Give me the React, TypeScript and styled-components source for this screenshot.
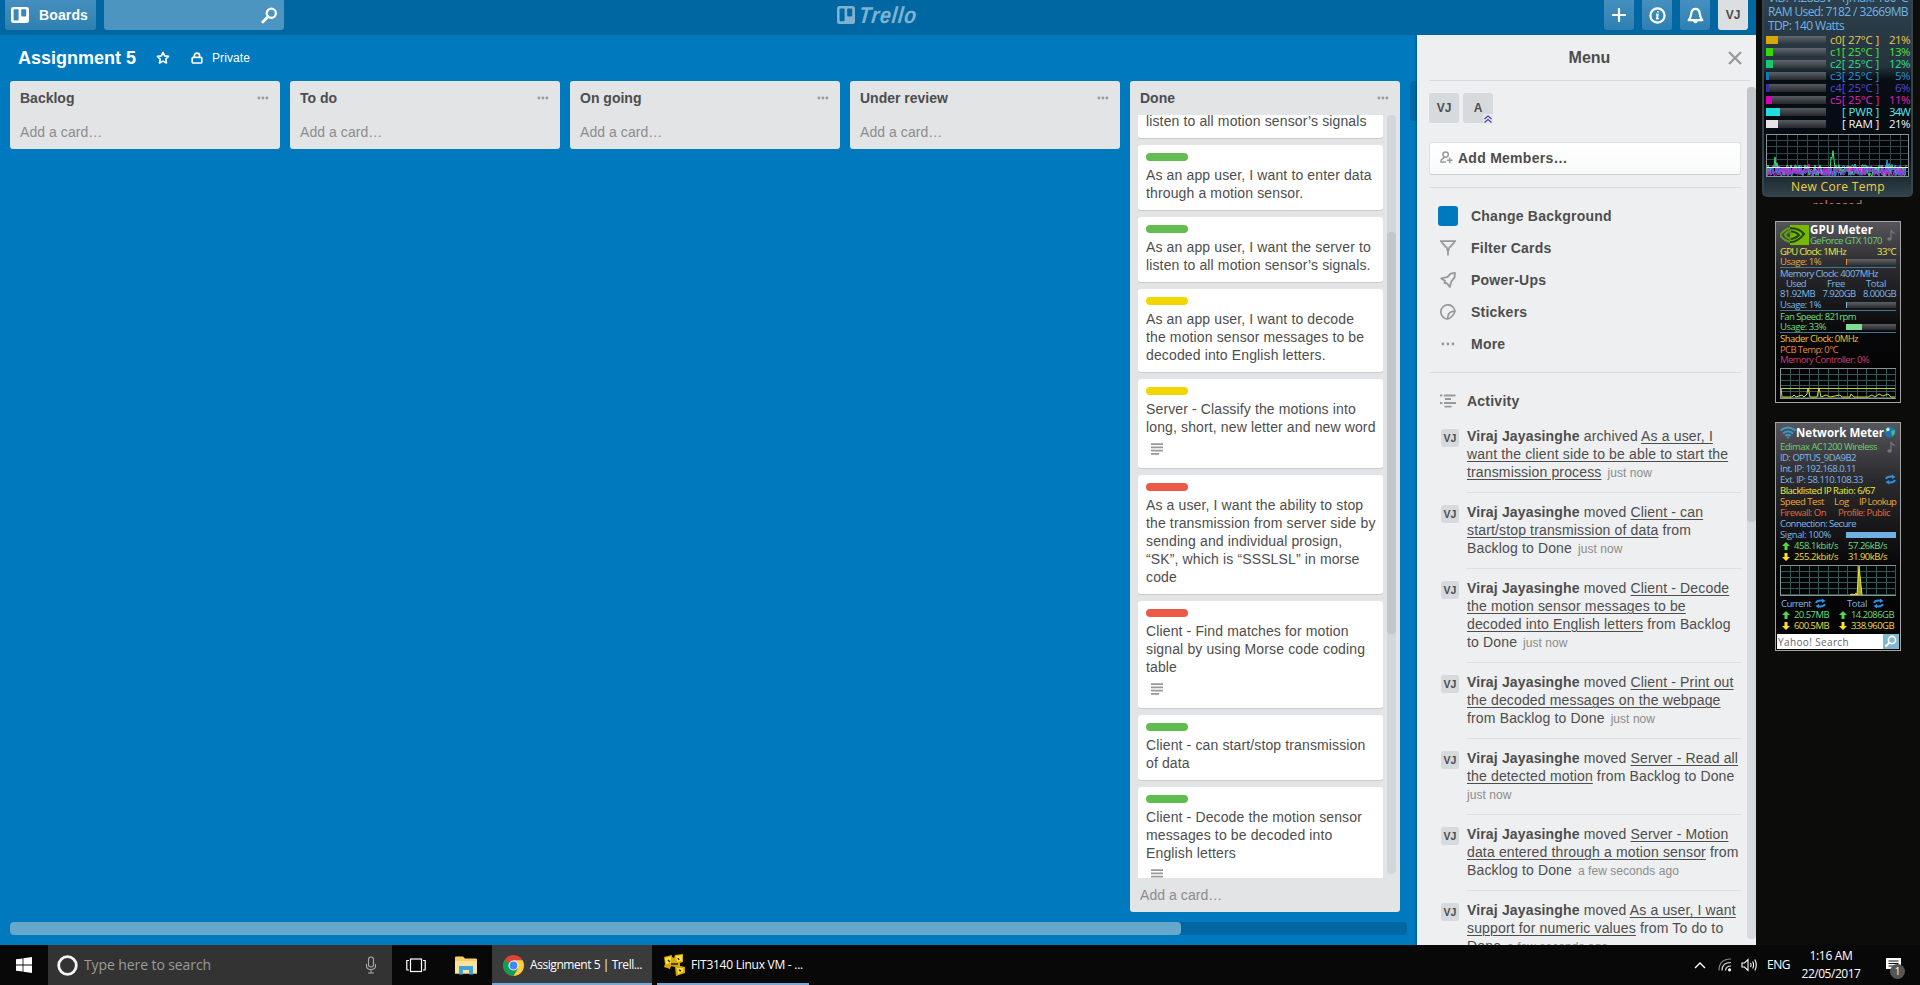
import React, { useLayoutEffect, useRef } from "react";
import styled, { createGlobalStyle, css } from "styled-components";

const Global = createGlobalStyle`
  * { box-sizing: border-box; }
  body { margin: 0; background: #0c0c0b; overflow: hidden; }
`;

const ui = `"Liberation Sans", Arial, sans-serif`;
const segoe = `"Open Sans", "Noto Sans", sans-serif`;

/* ---------- text squeezed into a fixed label width ---------- */
const Label = styled.span`
  display: inline-block;
  white-space: pre;
  flex: none;
`;
function Fit({ w, children, className }: { w: number; children: string; className?: string }) {
  const ref = useRef<HTMLSpanElement>(null);
  useLayoutEffect(() => {
    const el = ref.current;
    if (!el) return;
    el.style.letterSpacing = "0px";
    const natural = el.getBoundingClientRect().width;
    el.style.letterSpacing = `${(w - natural) / children.length}px`;
  }, [w, children]);
  return (
    <Label ref={ref} className={className}>
      {children}
    </Label>
  );
}

/* ---------- page frame ---------- */
const Screen = styled.div`
  width: 1920px;
  height: 985px;
  display: flex;
  flex-direction: column;
  overflow: hidden;
  background: #0c0c0b;
  font-family: ${ui};
`;
const Desktop = styled.div`
  display: flex;
  height: 945px;
`;
const Browser = styled.div`
  width: 1756px;
  height: 945px;
  display: flex;
  flex-direction: column;
  background: #0079bf;
`;

/* ---------- top bar ---------- */
const TopBar = styled.header`
  height: 35px;
  flex: none;
  display: flex;
  justify-content: space-between;
  align-items: flex-start;
  padding: 0 8px 0 5px;
  background: #0067a3;
`;
const BarGroup = styled.div<{ $gap: number; $w?: number }>`
  display: flex;
  gap: ${(p) => p.$gap}px;
  ${(p) => p.$w && `width: ${p.$w}px;`}
  justify-content: ${(p) => (p.$w ? "flex-end" : "flex-start")};
`;
const BarButton = styled.div<{ $w?: number }>`
  width: ${(p) => p.$w ?? 30}px;
  height: 30px;
  display: flex;
  align-items: center;
  justify-content: center;
  gap: 10px;
  border-radius: 0 0 3px 3px;
  background: linear-gradient(#4590bf, #2e80b2);
  color: #fff;
  font-weight: 700;
  font-size: 14px;
`;
const HomeButton = styled(BarButton)`
  justify-content: flex-start;
  padding-left: 6px;
`;
const SearchBox = styled(BarButton)`
  justify-content: flex-end;
  padding-right: 6px;
  background: #4d95c1;
`;
const UserButton = styled(BarButton)`
  background: #dcdfe1;
  color: #4d4d4d;
  font-size: 12px;
`;
const Logo = styled.div`
  display: flex;
  align-items: center;
  gap: 4px;
  height: 30px;
  color: #7fb2d1;
  font: italic 700 23px/29px ${ui};
`;
const LogoText = styled.span`
  display: block;
  width: 55px;
  height: 29px;
  transform: skewX(-6deg) scaleX(0.86);
  transform-origin: left center;
`;

/* ---------- board ---------- */
const Main = styled.div`
  display: flex;
  height: 910px;
`;
const Board = styled.div`
  width: 1417px;
  display: flex;
  flex-direction: column;
  overflow: hidden;
`;
const BoardHeader = styled.div`
  height: 46px;
  flex: none;
  display: flex;
  align-items: center;
  padding: 0 0 0 18px;
  color: #fff;
`;
const BoardName = styled.h1`
  margin: 0;
  width: 138px;
  font: 700 18px/24px ${ui};
`;
const Privacy = styled.div`
  display: flex;
  align-items: center;
  gap: 9px;
  margin-left: 21px;
  font-size: 12px;
`;
const Lists = styled.div`
  display: flex;
  flex: none;
  align-items: flex-start;
  gap: 10px;
  height: 831px;
  padding-left: 10px;
  overflow: hidden;
`;
const ListBox = styled.section`
  width: 270px;
  flex: none;
  display: flex;
  flex-direction: column;
  border-radius: 3px;
  background: #e2e4e6;
`;
const NextList = styled.div`
  width: 270px;
  height: 40px;
  flex: none;
  border-radius: 3px;
  background: #006aa8;
`;
const ListHead = styled.div`
  height: 34px;
  display: flex;
  align-items: center;
  justify-content: space-between;
  padding: 0 11px 0 10px;
  color: #4d4d4d;
  font: 700 14px/18px ${ui};
`;
const AddCard = styled.div`
  height: 34px;
  padding-left: 10px;
  color: #8c8c8c;
  font: 14px/34px ${ui};
  letter-spacing: 0.06px;
`;
const ScrollArea = styled.div`
  height: 763px;
  display: flex;
  gap: 4px;
  padding-left: 8px;
`;
const Cards = styled.div`
  width: 245px;
  height: 763px;
  overflow: hidden;
`;
const CardBox = styled.article<{ $cut?: boolean }>`
  margin: ${(p) => (p.$cut ? "-3px" : 0)} 0 7px;
  padding: ${(p) => (p.$cut ? 0 : 8)}px 8px 8px;
  border-radius: 3px;
  background: #fff;
  box-shadow: 0 1px 0 #ccc;
  color: #4d4d4d;
  font: 14px/18px ${ui};
  letter-spacing: 0.13px;
`;
const Line = styled.div`
  white-space: nowrap;
`;
const colours = { green: "#61bd4f", yellow: "#f2d600", red: "#eb5a46" };
const Tag = styled.div<{ $c: keyof typeof colours }>`
  width: 42px;
  height: 8px;
  margin-bottom: 5px;
  border-radius: 4px;
  background: ${(p) => colours[p.$c]};
`;
const Badge = styled.div`
  height: 24px;
  padding: 7px 0 0 5px;
`;
const Track = styled.div<{ $w: number; $h: number; $bg: string }>`
  width: ${(p) => p.$w}px;
  height: ${(p) => p.$h}px;
  flex: none;
  border-radius: 4px;
  background: ${(p) => p.$bg};
`;
const Thumb = styled.div<{ $top?: number; $w?: number; $h: number; $bg: string }>`
  margin-top: ${(p) => p.$top ?? 0}px;
  width: ${(p) => (p.$w ? `${p.$w}px` : "100%")};
  height: ${(p) => p.$h}px;
  border-radius: 4px;
  background: ${(p) => p.$bg};
`;
const TrackFlow = styled(Track)`
  display: flow-root;
`;
const BottomScroll = styled.div`
  padding: 10px 0 10px 10px;
`;

const Dots = ({ r = 1.4, gap = 4, c = "#999" }) => (
  <svg width={gap * 2 + r * 2 + 1} height="6" viewBox={`0 0 ${gap * 2 + r * 2 + 1} 6`}>
    {[0, 1, 2].map((i) => (
      <circle key={i} cx={r + 0.5 + i * gap} cy="3" r={r} fill={c} />
    ))}
  </svg>
);

type Card = { tag?: keyof typeof colours; lines: string[]; desc?: boolean };
const doneCards: Card[] = [
  { lines: ["listen to all motion sensor’s signals"] },
  { tag: "green", lines: ["As an app user, I want to enter data", "through a motion sensor."] },
  { tag: "green", lines: ["As an app user, I want the server to", "listen to all motion sensor’s signals."] },
  { tag: "yellow", lines: ["As an app user, I want to decode", "the motion sensor messages to be", "decoded into English letters."] },
  { tag: "yellow", lines: ["Server - Classify the motions into", "long, short, new letter and new word"], desc: true },
  { tag: "red", lines: ["As a user, I want the ability to stop", "the transmission from server side by", "sending and individual prosign,", "“SK”, which is “SSSLSL” in morse", "code"] },
  { tag: "red", lines: ["Client - Find matches for motion", "signal by using Morse code coding", "table"], desc: true },
  { tag: "green", lines: ["Client - can start/stop transmission", "of data"] },
  { tag: "green", lines: ["Client - Decode the motion sensor", "messages to be decoded into", "English letters"], desc: true },
];

/* ---------- menu ---------- */
const Menu = styled.aside`
  width: 339px;
  height: 910px;
  display: flex;
  flex-direction: column;
  background: #edeff0;
  color: #4d4d4d;
  box-shadow: 0 0 3px rgba(0, 0, 0, 0.5);
  clip-path: inset(0 0 0 -4px);
`;
const MenuHead = styled.div`
  height: 46px;
  flex: none;
  display: grid;
  grid-template-columns: 1fr auto 1fr;
  align-items: center;
  margin: 0 6px 0 12px;
  border-bottom: 1px solid #d6dadc;
  font: 700 16px/20px ${ui};
`;
const MenuTitle = styled.span`
  grid-column: 2;
`;
const CloseSlot = styled.span`
  justify-self: end;
  display: flex;
  padding-right: 8px;
  margin-top: 1px;
`;
const MenuScroll = styled.div`
  display: flex;
  height: 864px;
`;
const MenuBody = styled.div`
  width: 330px;
  height: 864px;
  padding: 12px 6px 0 12px;
  overflow: hidden;
`;
const MenuTrack = styled(TrackFlow)`
  margin-top: 6px;
`;
const Members = styled.div`
  display: flex;
  gap: 4px;
`;
const Avatar = styled.div<{ $small?: boolean }>`
  position: relative;
  width: ${(p) => (p.$small ? 18 : 30)}px;
  height: ${(p) => (p.$small ? 18 : 30)}px;
  flex: none;
  border-radius: 3px;
  background: #d6dadc;
  color: #4d4d4d;
  text-align: center;
  font: 700 ${(p) => (p.$small ? "10.5px/19px" : "12px/30px")} ${ui};
`;
const Admin = styled.svg`
  position: absolute;
  right: 0;
  bottom: -1px;
`;
const AddMembers = styled.div`
  height: 33px;
  margin-top: 19px;
  display: flex;
  align-items: center;
  gap: 5px;
  padding: 0 0 2px 10px;
  border: 1px solid #dfe1e2;
  border-bottom-color: #cdd0d1;
  border-radius: 3px;
  background: linear-gradient(#fff, #f8f9f9);
  font: 700 14px/18px ${ui};
  letter-spacing: 0.26px;
`;
const Rule = styled.div<{ $top: number; $bottom: number }>`
  height: 1px;
  margin: ${(p) => p.$top}px 0 ${(p) => p.$bottom}px;
  background: #d6dadc;
`;
const MenuItem = styled.div`
  height: 32px;
  display: grid;
  grid-template-columns: 33px 1fr;
  align-items: center;
  padding-left: 9px;
  font: 700 14px/18px ${ui};
  letter-spacing: 0.23px;
`;
const IconSlot = styled.span`
  width: 20px;
  display: flex;
  justify-content: center;
`;
const Swatch = styled.span`
  width: 20px;
  height: 20px;
  border-radius: 3px;
  background: #0079bf;
`;
const ActivityHead = styled(MenuItem)`
  height: 36px;
  grid-template-columns: 29px 1fr;
`;
const Entry = styled.div`
  display: flex;
  gap: 8px;
  padding-left: 12px;
`;
const EntryText = styled.div`
  flex: 1;
  margin-bottom: 10px;
  padding-bottom: 11px;
  border-bottom: 1px solid #dcdfe1;
  font: 14px/18px ${ui};
  letter-spacing: 0.15px;
  & > div { white-space: nowrap; height: 18px; }
  u { text-decoration-thickness: 1px; text-underline-offset: 2px; }
`;
const AvatarSlot = styled.div`
  padding-top: 2px;
`;
const When = styled.span<{ $alone?: boolean }>`
  color: #8c8c8c;
  font-size: 12px;
  line-height: 12px;
  letter-spacing: 0.05px;
  margin-left: ${(p) => (p.$alone ? 0 : 6)}px;
`;

const name = <b>Viraj Jayasinghe</b>;
const activity: React.ReactNode[][] = [
  [<>{name} archived <u>As a user, I</u></>, <u>want the client side to be able to start the</u>, <><u>transmission process</u><When>just now</When></>],
  [<>{name} moved <u>Client - can</u></>, <><u>start/stop transmission of data</u> from</>, <>Backlog to Done<When>just now</When></>],
  [<>{name} moved <u>Client - Decode</u></>, <u>the motion sensor messages to be</u>, <><u>decoded into English letters</u> from Backlog</>, <>to Done<When>just now</When></>],
  [<>{name} moved <u>Client - Print out</u></>, <u>the decoded messages on the webpage</u>, <>from Backlog to Done<When>just now</When></>],
  [<>{name} moved <u>Server - Read all</u></>, <><u>the detected motion</u> from Backlog to Done</>, <When $alone>just now</When>],
  [<>{name} moved <u>Server - Motion</u></>, <><u>data entered through a motion sensor</u> from</>, <>Backlog to Done<When>a few seconds ago</When></>],
  [<>{name} moved <u>As a user, I want</u></>, <><u>support for numeric values</u> from To do to</>, <>Done<When>a few seconds ago</When></>],
];

/* ---------- desktop gadgets ---------- */
const Gadgets = styled.div`
  width: 164px;
  height: 945px;
  display: flex;
  flex-direction: column;
  align-items: flex-start;
  padding-left: 6px;
  font-family: ${segoe};
  overflow: hidden;
`;
const CoreTemp = styled.div`
  width: 151px;
  height: 197px;
  flex: none;
  display: flex;
  flex-direction: column;
  padding: 0 1px 0 2px;
  overflow: hidden;
  border: 2px solid #35434b;
  border-top: 0;
  border-radius: 0 0 5px 5px;
  background: linear-gradient(#2c3f4c 0, #25343e 66px, #060d13 80px, #050b12 150px, #33434c 197px);
  color: #6fb4e6;
  font-size: 12px;
`;
const CoreLine = styled.div<{ $h: number }>`
  height: ${(p) => p.$h}px;
  display: flex;
  align-items: flex-end;
  line-height: 14px;
  padding-left: 2px;
`;
const CoreRows = styled.div`
  padding-top: 1px;
`;
const CoreRow = styled.div<{ $c: string }>`
  height: 12px;
  display: flex;
  align-items: center;
  color: ${(p) => p.$c};
  font-size: 11.5px;
  line-height: 12px;
`;
const PctSlot = styled.div`
  width: 31px;
  display: flex;
  justify-content: flex-end;
`;
const Grow = styled.span`
  flex: 1;
`;
const Meter = styled.div<{ $w: number; $h: number; $fill: number; $c: string }>`
  width: ${(p) => p.$w}px;
  height: ${(p) => p.$h}px;
  flex: none;
  background: linear-gradient(${(p) => p.$c}, ${(p) => p.$c}) 0 0 / ${(p) => p.$fill}px 100% no-repeat,
    linear-gradient(rgba(120, 125, 130, 0.7), rgba(50, 52, 56, 0.7));
`;
const CoreFoot = styled.div`
  height: 21px;
  display: flex;
  justify-content: center;
  align-items: flex-end;
  line-height: 17px;
  color: #f0d040;
  font-size: 12px;
`;
const Cropped = styled.div`
  width: 151px;
  height: 4px;
  margin-top: 3px;
  flex: none;
  overflow: hidden;
  text-align: center;
  color: #e87a86;
  font: 12px/12px ${segoe};
`;
const Panel = styled.div<{ $top: number; $h: number }>`
  width: 126px;
  height: ${(p) => p.$h}px;
  margin: ${(p) => p.$top}px 0 0 13px;
  flex: none;
  display: flex;
  flex-direction: column;
  padding: 0 4px;
  border: 1px solid #a3a3a3;
  background: linear-gradient(#55555a, #2b2b2e 25%, #08080a 62%, #000);
  color: #7fb8e8;
  font-size: 9.5px;
`;
const Row = styled.div<{ $h?: number; $c?: string; $line?: boolean; $pad?: number }>`
  height: ${(p) => p.$h ?? 10}px;
  flex: none;
  display: flex;
  align-items: center;
  justify-content: space-between;
  line-height: 10px;
  padding-left: ${(p) => p.$pad ?? 0}px;
  ${(p) => p.$c && `color: ${p.$c};`}
  ${(p) => p.$line && css`border-bottom: 1px solid #3f7796;`}
`;
const Inset = styled.div<{ $r: number }>`
  padding-right: ${(p) => p.$r}px;
`;
const TitleRow = styled.div<{ $h: number }>`
  height: ${(p) => p.$h}px;
  display: flex;
  flex: none;
  align-items: center;
  justify-content: space-between;
`;
const TitleStack = styled.div`
  display: flex;
  flex-direction: column;
  width: 76px;
`;
const Title = styled.div`
  height: 11px;
  color: #fff;
  font-weight: 700;
  font-size: 11.5px;
  line-height: 11px;
`;
const Sub = styled.div`
  height: 10px;
  color: #6fd06f;
  line-height: 11px;
`;
const YahooBox = styled.div`
  height: 15px;
  margin: 3px -3px 0;
  display: flex;
  align-items: center;
  justify-content: space-between;
  background: #fff;
  color: #666;
  font-size: 10px;
  line-height: 12px;
  padding-left: 1px;
`;
const Gap = styled.div<{ $h: number }>`
  height: ${(p) => p.$h}px;
  flex: none;
`;
const Plot = styled.svg`
  flex: none;
`;

function noise(n: number, seed: number) {
  let s = seed;
  return Array.from({ length: n }, () => ((s = (s * 16807) % 2147483647) / 2147483647));
}
function Graph({ w, h, step, children, c = "#2f4c4c" }: { w: number; h: number; step: number; children?: React.ReactNode; c?: string }) {
  return (
    <Plot width={w} height={h} viewBox={`0 0 ${w} ${h}`}>
      <rect x="0.5" y="0.5" width={w - 1} height={h - 1} fill="#020507" stroke="#8a9494" />
      {Array.from({ length: Math.floor(w / step) }, (_, i) => (
        <path key={i} d={`M${Math.round((i + 1) * step) + 0.5} 1V${h - 1}`} stroke={c} />
      ))}
      {Array.from({ length: Math.floor(h / (step * 0.6)) }, (_, i) => (
        <path key={i} d={`M1 ${Math.round((i + 1) * step * 0.6) + 0.5}H${w - 1}`} stroke={c} />
      ))}
      {children}
    </Plot>
  );
}
const series = (seed: number, amp: number, peaks: Record<number, number>) =>
  "M1 42 " + noise(140, seed).map((v, i) => `L${1 + i} ${(42 - v * amp - (peaks[i] ?? 0)).toFixed(1)}`).join(" ");

const cores: [string, string, string, string, number][] = [
  ["#e8c84a", "c0[ 27°C ]", "21%", "#d8a80c", 12],
  ["#4fe03a", "c1[ 25°C ]", "13%", "#35d80a", 7],
  ["#35dc8a", "c2[ 25°C ]", "12%", "#18c870", 7],
  ["#2c92d8", "c3[ 25°C ]", "5%", "#1677b0", 3],
  ["#5548d8", "c4[ 25°C ]", "6%", "#3c2f9c", 3],
  ["#e020b8", "c5[ 25°C ]", "11%", "#d800b0", 6],
  ["#50e8e8", "[ PWR ]", "34W", "#22dce0", 14],
  ["#f4f4f4", "[ RAM ]", "21%", "#e4e4e4", 12],
];

const Arrow = ({ up }: { up?: boolean }) => (
  <svg width="8" height="8" viewBox="0 0 8 8">
    <path
      d={up ? "M4 0L8 4H5.5V8H2.5V4H0Z" : "M4 8L8 4H5.5V0H2.5V4H0Z"}
      fill={up ? "#4fd84a" : "#ffe02a"}
    />
  </svg>
);
const Refresh = () => (
  <svg width="11" height="11" viewBox="0 0 11 10" fill="none" stroke="#2f8fe0" strokeWidth="2">
    <path d="M1 4.5Q2 1.6 7.5 2.2M10 5.5Q9 8.4 3.5 7.8" />
    <path d="M7 0L10.5 2.5L7 4.5ZM4 5.5L.5 7.5L4 10Z" fill="#2f8fe0" stroke="none" />
  </svg>
);
const Note = () => (
  <svg width="9" height="12" viewBox="0 0 9 12" fill="none" stroke="#777" strokeWidth="1.2">
    <path d="M4 10V1Q5 3.5 8 4.5" />
    <ellipse cx="2.5" cy="10" rx="1.6" ry="1.2" fill="#777" />
  </svg>
);
const Pair = styled.div`
  display: flex;
  align-items: center;
  gap: 4px;
  width: 57px;
`;
const TotalPair = styled(Pair)`
  width: 49px;
  gap: 6px;
`;

/* ---------- taskbar ---------- */
const Taskbar = styled.footer`
  height: 40px;
  display: flex;
  justify-content: space-between;
  background: #080808;
  color: #fff;
  font: 12px/16px ${segoe};
`;
const TaskGroup = styled.div`
  display: flex;
`;
const TaskIcon = styled.div<{ $w: number }>`
  width: ${(p) => p.$w}px;
  height: 40px;
  display: flex;
  align-items: center;
  justify-content: center;
`;
const TaskSearch = styled.div`
  width: 344px;
  height: 40px;
  display: flex;
  align-items: center;
  padding: 0 15px 0 9px;
  gap: 6px;
  background: #333;
  color: #9b9b9b;
  font-size: 14px;
`;
const TaskWindow = styled.div<{ $active?: boolean; $w: number }>`
  width: ${(p) => p.$w}px;
  height: 40px;
  display: flex;
  align-items: center;
  gap: 6px;
  margin-right: 5px;
  padding: 2px 0 0 ${(p) => (p.$active ? 11 : 7)}px;
  background: ${(p) => (p.$active ? "#3b3b3b" : "transparent")};
  border-bottom: 2px solid #76a9d8;
`;
const Clock = styled.div`
  width: 70px;
  display: flex;
  flex-direction: column;
  align-items: center;
  justify-content: center;
  line-height: 18px;
`;
const Notice = styled.div`
  position: relative;
  width: 54px;
  display: flex;
  align-items: center;
  justify-content: center;
`;
const NoticeCount = styled.span`
  position: absolute;
  left: 24px;
  top: 19px;
  width: 15px;
  height: 15px;
  border-radius: 50%;
  background: #555;
  text-align: center;
  font-size: 10px;
  line-height: 15px;
`;

const TrelloMark = ({ w, h, c, bg }: { w: number; h: number; c: string; bg: string }) => (
  <svg width={w} height={h} viewBox="0 0 18 18" preserveAspectRatio="none">
    <rect width="18" height="18" rx="2.5" fill={c} />
    <rect x="2.6" y="2.6" width="5" height="12.6" rx="1" fill={bg} />
    <rect x="10.2" y="2.6" width="5" height="8" rx="1" fill={bg} />
  </svg>
);

function CardView({ card }: { card: Card }) {
  return (
    <CardBox $cut={!card.tag}>
      {card.tag && <Tag $c={card.tag} />}
      {card.lines.map((l) => (
        <Line key={l}>{l}</Line>
      ))}
      {card.desc && (
        <Badge>
          <svg width="12" height="12" viewBox="0 0 12 12" stroke="#999" strokeWidth="1.7" display="block">
            <path d="M0 1.2H12M0 4.4H12M0 7.6H12M0 10.8H8" />
          </svg>
        </Badge>
      )}
    </CardBox>
  );
}

export default function App() {
  return (
    <Screen>
      <Global />
      <Desktop>
        <Browser>
          <TopBar>
            <BarGroup $gap={8}>
              <HomeButton $w={91}>
                <TrelloMark w={18} h={16} c="#fff" bg="#3a88b9" />
                <Fit w={49}>Boards</Fit>
              </HomeButton>
              <SearchBox $w={180}>
                <svg width="17" height="17" viewBox="0 0 17 17" fill="none" stroke="#fff" strokeWidth="2.2" strokeLinecap="round">
                  <circle cx="10.3" cy="6.3" r="4.6" />
                  <path d="M7 9.8L1.8 15" strokeWidth="2.8" />
                </svg>
              </SearchBox>
            </BarGroup>
            <Logo>
              <TrelloMark w={18} h={18} c="#7fb2d1" bg="#0067a3" />
              <LogoText>
                <Fit w={62}>Trello</Fit>
              </LogoText>
            </Logo>
            <BarGroup $gap={8} $w={281}>
              <BarButton>
                <svg width="14" height="14" viewBox="0 0 14 14" stroke="#fff" strokeWidth="2.2" strokeLinecap="round">
                  <path d="M7 1V13M1 7H13" />
                </svg>
              </BarButton>
              <BarButton>
                <svg width="17" height="17" viewBox="0 0 17 17" fill="none" stroke="#fff" strokeWidth="2.2">
                  <circle cx="8.5" cy="8.5" r="7.1" />
                  <path d="M7 7.6H8.8L7.9 11.6H9.8M9 4.2L8.8 5.6" strokeWidth="1.8" />
                </svg>
              </BarButton>
              <BarButton>
                <svg width="17" height="17" viewBox="0 0 17 17" fill="none" stroke="#fff" strokeWidth="2.2" strokeLinejoin="round">
                  <path d="M1.6 13.2Q3.6 11.4 4.2 6.8Q4.8 1.8 8.5 1.8Q12.2 1.8 12.8 6.8Q13.4 11.4 15.4 13.2Z" />
                  <path d="M6.5 14.6Q8.5 17 10.5 14.6Z" fill="#fff" strokeWidth="1" />
                </svg>
              </BarButton>
              <UserButton>VJ</UserButton>
            </BarGroup>
          </TopBar>
          <Main>
            <Board>
              <BoardHeader>
                <BoardName>
                  <Fit w={118}>Assignment 5</Fit>
                </BoardName>
                <svg width="14" height="14" viewBox="0 0 14 14" fill="none" stroke="#fff" strokeWidth="1.6" strokeLinejoin="round">
                  <path d="M7 1.4L8.7 4.9L12.6 5.4L9.8 8.1L10.5 12L7 10.1L3.5 12L4.2 8.1L1.4 5.4L5.3 4.9Z" />
                </svg>
                <Privacy>
                  <svg width="12" height="12" viewBox="0 0 12 12" fill="none" stroke="#fff" strokeWidth="1.7">
                    <rect x="1.2" y="5.4" width="9.6" height="5.6" rx="1" />
                    <path d="M3.4 5.4V3.6Q3.4 1.2 6 1.2Q8.6 1.2 8.6 3.6V5.4" />
                  </svg>
                  <Fit w={38}>Private</Fit>
                </Privacy>
              </BoardHeader>
              <Lists>
                {(["Backlog", "To do", "On going", "Under review"] as const).map((t) => (
                  <ListBox key={t}>
                    <ListHead>
                      {t}
                      <Dots />
                    </ListHead>
                    <AddCard>Add a card…</AddCard>
                  </ListBox>
                ))}
                <ListBox>
                  <ListHead>
                    Done
                    <Dots />
                  </ListHead>
                  <ScrollArea>
                    <Cards>
                      {doneCards.map((c, i) => (
                        <CardView key={i} card={c} />
                      ))}
                    </Cards>
                    <TrackFlow $w={9} $h={759} $bg="#d3d7d9">
                      <Thumb $top={117} $h={402} $bg="#c1c6c9" />
                    </TrackFlow>
                  </ScrollArea>
                  <AddCard>Add a card…</AddCard>
                </ListBox>
                <NextList />
              </Lists>
              <BottomScroll>
                <Track $w={1397} $h={13} $bg="#0067a3">
                  <Thumb $w={1171} $h={13} $bg="#66a7cc" />
                </Track>
              </BottomScroll>
            </Board>
            <Menu>
              <MenuHead>
                <MenuTitle>Menu</MenuTitle>
                <CloseSlot>
                  <svg width="14" height="14" viewBox="0 0 14 14" stroke="#999" strokeWidth="2.2">
                    <path d="M1 1L13 13M13 1L1 13" />
                  </svg>
                </CloseSlot>
              </MenuHead>
              <MenuScroll>
                <MenuBody>
                  <Members>
                    <Avatar>VJ</Avatar>
                    <Avatar>
                      A
                      <Admin width="10" height="10" viewBox="0 0 10 10" fill="none" stroke="#4a47a3" strokeWidth="1.3">
                        <rect width="10" height="10" fill="#e6e6f0" stroke="none" />
                        <path d="M1.5 5L5 2L8.5 5M1.5 8.6L5 5.6L8.5 8.6" />
                      </Admin>
                    </Avatar>
                  </Members>
                  <AddMembers>
                    <svg width="13" height="13" viewBox="0 0 13 13" fill="none" stroke="#999" strokeWidth="1.5">
                      <circle cx="5.6" cy="3.6" r="2.7" />
                      <path d="M4.3 5.8Q3.8 7.4 2 8.2Q.9 8.8 1 11H6M9.7 6.4V12.2M6.9 9.3H12.6" />
                    </svg>
                    Add Members…
                  </AddMembers>
                  <Rule $top={12} $bottom={12} />
                  <MenuItem>
                    <Swatch />
                    Change Background
                  </MenuItem>
                  <MenuItem>
                    <IconSlot>
                      <svg width="16" height="16" viewBox="0 0 16 16" fill="none" stroke="#999" strokeWidth="1.8">
                        <path d="M0 1.2H16M1.5 2.2L7.2 8.4V9.5H8.8V8.4L14.5 2.2M8 9V15.5" />
                      </svg>
                    </IconSlot>
                    Filter Cards
                  </MenuItem>
                  <MenuItem>
                    <IconSlot>
                      <svg width="16" height="16" viewBox="0 0 16 16" fill="none" stroke="#999" strokeWidth="1.8" strokeLinejoin="round">
                        <path d="M15 1L10.6 1.6L7.6 4.8L1.2 6.4L5 8.8L4.4 11L7 11.4L9.8 15L11.4 9.4L14.6 5.4Z" />
                      </svg>
                    </IconSlot>
                    Power-Ups
                  </MenuItem>
                  <MenuItem>
                    <IconSlot>
                      <svg width="16" height="16" viewBox="0 0 16 16" fill="none" stroke="#999" strokeWidth="1.7">
                        <path d="M7.6 15A7.1 7.1 0 1 1 15 7.2Q14.6 9.6 12.2 12Q9.8 14.6 7.6 15Q7.8 9.4 11 8Q13 7.4 15 7.2" />
                      </svg>
                    </IconSlot>
                    <span>Stickers</span>
                  </MenuItem>
                  <MenuItem>
                    <IconSlot>
                      <Dots gap={5} />
                    </IconSlot>
                    More
                  </MenuItem>
                  <Rule $top={12} $bottom={10} />
                  <ActivityHead>
                    <IconSlot>
                      <svg width="16" height="14" viewBox="0 0 16 14" stroke="#999" strokeWidth="1.8">
                        <path d="M0 1.5H2.4M4 1.5H15.5M5 5H11M0 9H2.4M4 9H16M4.5 12.6H11.5" />
                      </svg>
                    </IconSlot>
                    Activity
                  </ActivityHead>
                  <Gap $h={8} />
                  {activity.map((lines, i) => (
                    <Entry key={i}>
                      <AvatarSlot>
                        <Avatar $small>VJ</Avatar>
                      </AvatarSlot>
                      <EntryText>
                        {lines.map((l, j) => (
                          <div key={j}>{l}</div>
                        ))}
                      </EntryText>
                    </Entry>
                  ))}
                </MenuBody>
                <MenuTrack $w={9} $h={852} $bg="#d6dadc">
                  <Thumb $h={435} $bg="#c0c6ca" />
                </MenuTrack>
              </MenuScroll>
            </Menu>
          </Main>
        </Browser>
        <Gadgets>
          <CoreTemp>
            <CoreLine $h={5}><Fit w={140}>VID: 1.2885v - Tjmax: 100°C</Fit></CoreLine>
            <CoreLine $h={14}><Fit w={140}>RAM Used: 7182 / 32669MB</Fit></CoreLine>
            <CoreLine $h={14}><Fit w={76}>TDP: 140 Watts</Fit></CoreLine>
            <CoreRows>
              {cores.map(([c, label, pct, bar, fill], i) => (
                <CoreRow $c={c} key={label}>
                  <Meter $w={60} $h={8} $fill={fill} $c={bar} />
                  <Grow />
                  <Fit w={i < 6 ? 49 : 37}>{label}</Fit>
                  <PctSlot>
                    <Fit w={i === 3 || i === 4 ? 15 : 21}>{pct}</Fit>
                  </PctSlot>
                </CoreRow>
              ))}
            </CoreRows>
            <Gap $h={4} />
            <Graph w={143} h={43} step={10.3} c="#33464c">
              <g fill="none" strokeWidth="1">
                <path d={series(7, 12, { 6: 6, 8: 10, 10: 5, 64: 8, 65: 12, 66: 15, 67: 9, 69: 5 })} stroke="#3fe07a" />
                <path d={series(19, 11, { 120: 8, 122: 12, 128: 6 })} stroke="#3aa8e0" />
                <path d={series(31, 10, { 42: 8, 68: 6 })} stroke="#e020c8" />
                <path d={series(83, 9, { 60: 6 })} stroke="#6a50e0" />
                <path d="M1 33.5H142" stroke="#e8f0f0" />
              </g>
            </Graph>
            <CoreFoot><Fit w={94}>New Core Temp</Fit></CoreFoot>
          </CoreTemp>
          <Cropped><Fit w={50}>released</Fit></Cropped>
          <Panel $top={17} $h={182}>
            <TitleRow $h={25}>
              <svg width="29" height="20" viewBox="0 0 29 20">
                <rect x="10" width="19" height="20" fill="#76b900" />
                <g fill="none" strokeWidth="2">
                  <path d="M0 10Q5 3.5 11 3Q19 3 24 9Q18 17 11 17Q4 16 0 10Z" stroke="#5f9f1a" />
                  <path d="M10 3.2Q19 3 24 9Q18 17 10 17M10 6.2Q17 7 19 10Q15 14 10 14" stroke="#25420c" />
                  <path d="M11 14Q5 12 5 9.5Q8 6 11 6M11 10.5L12 9" stroke="#5f9f1a" />
                </g>
              </svg>
              <TitleStack>
                <Title><Fit w={63}>GPU Meter</Fit></Title>
                <Sub><Fit w={72}>GeForce GTX 1070</Fit></Sub>
              </TitleStack>
              <Note />
            </TitleRow>
            <Row $c="#e8e84a" $h={10}><Fit w={66}>GPU Clock: 1MHz</Fit><Fit w={19}>33°C</Fit></Row>
            <Row $c="#e8a83a" $h={11} $line><Fit w={41}>Usage: 1%</Fit><Meter $w={50} $h={6} $fill={1} $c="#e8902a" /></Row>
            <Row $h={11}><Fit w={98}>Memory Clock: 4007MHz</Fit></Row>
            <Row $pad={6}><Fit w={20}>Used</Fit><Fit w={18}>Free</Fit><Inset $r={10}><Fit w={20}>Total</Fit></Inset></Row>
            <Row><Fit w={35}>81.92MB</Fit><Fit w={33}>7.920GB</Fit><Fit w={33}>8.000GB</Fit></Row>
            <Row $h={12} $line><Fit w={41}>Usage: 1%</Fit><Meter $w={50} $h={6} $fill={1} $c="#7fb8e8" /></Row>
            <Row $c="#6fdc7c" $h={11}><Fit w={76}>Fan Speed: 821rpm</Fit></Row>
            <Row $c="#6fdc7c" $h={11} $line><Fit w={46}>Usage: 33%</Fit><Meter $w={50} $h={6} $fill={16} $c="#7fdc94" /></Row>
            <Row $c="#f0c030" $h={12}><Fit w={78}>Shader Clock: 0MHz</Fit></Row>
            <Row $c="#e88040"><Fit w={58}>PCB Temp: 0°C</Fit></Row>
            <Row $c="#d03a66"><Fit w={89}>Memory Controller: 0%</Fit></Row>
            <Gap $h={3} />
            <Graph w={116} h={31} step={9.6} c="#355a54">
              <path d="M1 20.5H115" stroke="#c8c830" />
              <path d="M1 20L2 29H12L14 27L16 29L22 27L24 29L27 26L28 20L30 29H37L39 20L41 29L46 27L50 29L60 27L62 29H70L71 26L74 29H88L92 27L95 29L99 26L103 28L108 26L111 29H115" fill="none" stroke="#e0d838" />
            </Graph>
          </Panel>
          <Panel $top={19} $h={229}>
            <TitleRow $h={18}>
              <svg width="16" height="13" viewBox="0 0 16 13" fill="none" stroke="#3a9ad0" strokeWidth="1.8">
                <path d="M.5 4.5Q8-1.6 15.5 4.5M3 7.5Q8 3.2 13 7.5M5.4 10Q8 7.6 10.6 10" />
                <circle cx="8" cy="11.5" r="1" fill="#3a9ad0" stroke="none" />
              </svg>
              <Title><Fit w={88}>Network Meter</Fit></Title>
              <svg width="12" height="12" viewBox="0 0 12 12">
                <circle cx="6" cy="6" r="5.8" fill="#1f6fb8" />
                <path d="M2 2.5Q5 0 6 3Q4 5 2.4 6ZM7 5L11 4Q11 9 8 10Z" fill="#4fc06a" />
                <circle cx="4" cy="3.5" r="1.5" fill="#d8f0ff" />
              </svg>
            </TitleRow>
            <Row $h={11} $c="#6fd06f"><Fit w={97}>Edimax AC1200 Wireless</Fit><Note /></Row>
            <Row $h={11}><Fit w={76}>ID: OPTUS_9DA9B2</Fit></Row>
            <Row $h={11}><Fit w={76}>Int. IP: 192.168.0.11</Fit></Row>
            <Row $h={11}><Fit w={83}>Ext. IP: 58.110.108.33</Fit><Refresh /></Row>
            <Row $h={11} $c="#ecec3c"><Fit w={95}>Blacklisted IP Ratio: 6/67</Fit></Row>
            <Row $h={11} $c="#f0a830"><Fit w={44}>Speed Test</Fit><Fit w={15}>Log</Fit><Fit w={37}>IP Lookup</Fit></Row>
            <Row $h={11} $c="#e06a3c"><Fit w={46}>Firewall: On</Fit><Inset $r={6}><Fit w={52}>Profile: Public</Fit></Inset></Row>
            <Row $h={11}><Fit w={76}>Connection: Secure</Fit></Row>
            <Row $h={11}><Fit w={51}>Signal: 100%</Fit><Meter $w={50} $h={6} $fill={50} $c="#6fb0e0" /></Row>
            <Row $h={11} $c="#6fdc7c" $pad={2}><Pair><Arrow up /><Fit w={44}>458.1kbit/s</Fit></Pair><Inset $r={9}><Fit w={39}>57.26kB/s</Fit></Inset></Row>
            <Row $h={11} $c="#ecdc3c" $pad={2}><Pair><Arrow /><Fit w={44}>255.2kbit/s</Fit></Pair><Inset $r={9}><Fit w={39}>31.90kB/s</Fit></Inset></Row>
            <Gap $h={3} />
            <Graph w={116} h={31} step={9.6} c="#355a54">
              <path d="M70 30L72 29L74 30L76 28L77 30L79 1L82 30" fill="#a8a820" stroke="#e8e838" />
            </Graph>
            <Gap $h={2} />
            <Row $h={11} $pad={1}><Pair><Fit w={30}>Current</Fit><Refresh /></Pair><TotalPair><Fit w={20}>Total</Fit><Refresh /></TotalPair></Row>
            <Row $h={11} $c="#6fdc7c" $pad={2}><Pair><Arrow up /><Fit w={35}>20.57MB</Fit></Pair><Pair><Arrow up /><Fit w={43}>14.2086GB</Fit></Pair></Row>
            <Row $h={11} $c="#ecdc3c" $pad={2}><Pair><Arrow /><Fit w={35}>600.5MB</Fit></Pair><Pair><Arrow /><Fit w={43}>338.960GB</Fit></Pair></Row>
            <YahooBox>
              <Fit w={71}>Yahoo! Search</Fit>
              <svg width="16" height="15" viewBox="0 0 16 15">
                <rect width="16" height="15" fill="#7fb8cc" />
                <circle cx="9" cy="6" r="3.6" fill="none" stroke="#fff" strokeWidth="1.6" />
                <path d="M6.4 8.6L2.5 12.5" stroke="#fff" strokeWidth="2" />
              </svg>
            </YahooBox>
          </Panel>
        </Gadgets>
      </Desktop>
      <Taskbar>
        <TaskGroup>
          <TaskIcon $w={48}>
            <svg width="16" height="16" viewBox="0 0 16 16" fill="#fff">
              <path d="M0 2.3L6.6 1.4V7.6H0ZM7.4 1.2L16 0V7.6H7.4ZM0 8.4H6.6V14.6L0 13.7ZM7.4 8.4H16V16L7.4 14.8Z" />
            </svg>
          </TaskIcon>
          <TaskSearch>
            <svg width="21" height="21" viewBox="0 0 21 21" fill="none" stroke="#f4f4f4" strokeWidth="2.8">
              <circle cx="10.5" cy="10.5" r="8.8" />
            </svg>
            <Fit w={127}>Type here to search</Fit>
            <Grow />
            <svg width="12" height="18" viewBox="0 0 12 18" fill="none" stroke="#aaa" strokeWidth="1.1">
              <rect x="3.5" y="1" width="5" height="10" rx="2.5" />
              <path d="M1.5 8V10Q1.5 13.5 6 13.5Q10.5 13.5 10.5 10V8M6 13.5V17M3 17H9" />
            </svg>
          </TaskSearch>
          <TaskIcon $w={48}>
            <svg width="20" height="16" viewBox="0 0 20 16" fill="none" stroke="#fff" strokeWidth="1.2">
              <rect x="4.5" y="2" width="11" height="12.5" />
              <path d="M3 3.5H.8V13H3M17 3.5H19.2V13H17" />
            </svg>
          </TaskIcon>
          <TaskIcon $w={52}>
            <svg width="22" height="19" viewBox="0 0 22 19">
              <path d="M0 1.5Q0 .5 1 .5H8L10 2.5H21Q22 2.5 22 3.5V17.5H0Z" fill="#f4cf6a" />
              <path d="M0 5H22V17.5H0Z" fill="#fbe29a" />
              <path d="M4 10H18V18.5H14V14H8V18.5H4Z" fill="#3fa4dc" />
            </svg>
          </TaskIcon>
          <TaskWindow $active $w={160}>
            <svg width="21" height="21" viewBox="0 0 22 22">
              <circle cx="11" cy="11" r="11" fill="#db4437" />
              <path d="M11 11L1.5 5.5A11 11 0 0 0 11 22L15.8 13.8Z" fill="#0f9d58" />
              <path d="M11 11L15.8 13.8L11 22A11 11 0 0 0 20.5 5.5H11Z" fill="#ffcd40" />
              <circle cx="11" cy="11" r="5.3" fill="#f4f4f4" />
              <circle cx="11" cy="11" r="4.1" fill="#4285f4" />
            </svg>
            <Fit w={112}>Assignment 5 | Trell...</Fit>
          </TaskWindow>
          <TaskWindow $w={152}>
            <svg width="21" height="22" viewBox="0 0 21 22">
              <path d="M0 3L8 1V3L10 4L11 1L19 0V8L16 9V12L21 13V19L12 22L11 13L7 12L6 15L0 13L1 10Z" fill="#d8a808" />
              <path d="M1 4L7 2.5V9L2 10ZM12 2L18 1V7L13 8ZM13 14L19 14V18L14 20Z" fill="#ffe238" />
              <path d="M4 6L6 8M14 4L15 6M15 16L17 17M7 10L14 10" stroke="#222" strokeWidth="1.4" />
            </svg>
            <Fit w={112}>FIT3140 Linux VM - ...</Fit>
          </TaskWindow>
        </TaskGroup>
        <TaskGroup>
          <TaskIcon $w={26}>
            <svg width="12" height="7" viewBox="0 0 12 7" fill="none" stroke="#fff" strokeWidth="1.4">
              <path d="M1 6L6 1L11 6" />
            </svg>
          </TaskIcon>
          <TaskIcon $w={24}>
            <svg width="14" height="14" viewBox="0 0 14 14" fill="none" stroke="#ddd" strokeWidth="1.2">
              <path d="M1 12.5Q1 1 13 1" stroke="#888" />
              <path d="M4 12.5Q4 4.5 13 4.5M7.5 12.5Q8 8 13 8" />
              <circle cx="11.6" cy="11.8" r="1.6" fill="#fff" stroke="none" />
            </svg>
          </TaskIcon>
          <TaskIcon $w={24}>
            <svg width="17" height="14" viewBox="0 0 17 14" fill="none" stroke="#fff" strokeWidth="1.1">
              <path d="M1 5H3.5L7 1.5V12.5L3.5 9H1ZM9.5 5Q10.6 7 9.5 9M11.6 3.4Q13.6 7 11.6 10.6M13.8 1.6Q16.8 7 13.8 12.4" />
            </svg>
          </TaskIcon>
          <TaskIcon $w={35}>
            <Fit w={23}>ENG</Fit>
          </TaskIcon>
          <Clock>
            <Fit w={43}>1:16 AM</Fit>
            <Fit w={59}>22/05/2017</Fit>
          </Clock>
          <Notice>
            <svg width="17" height="17" viewBox="0 0 17 17">
              <path d="M1 1H16V12H9L6 15.5V12H1Z" fill="#fff" />
              <path d="M3.5 4H13.5M3.5 6.5H13.5M3.5 9H9" stroke="#111" />
            </svg>
            <NoticeCount>1</NoticeCount>
          </Notice>
        </TaskGroup>
      </Taskbar>
    </Screen>
  );
}
